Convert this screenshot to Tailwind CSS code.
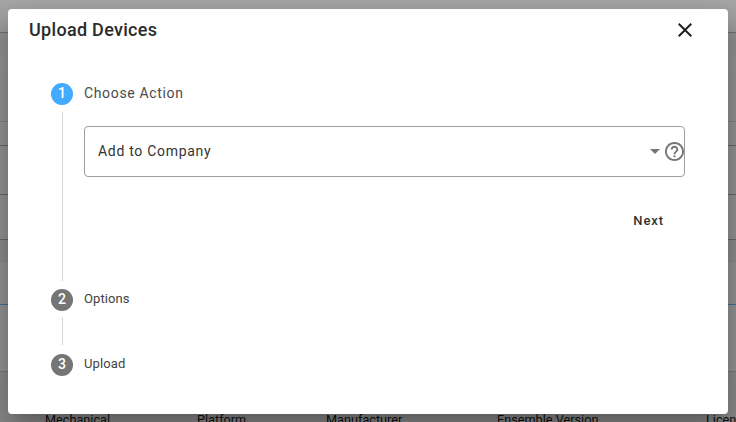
<!DOCTYPE html>
<html lang="en">
<head>
  <meta charset="UTF-8">
  <title>Upload Devices</title>
  <script src="https://cdn.jsdelivr.net/npm/@tailwindcss/browser@4"></script>
</head>
<body class="relative w-[736px] h-[422px] overflow-hidden bg-[#9a9a9a] font-['Roboto',sans-serif]">

  <!-- page behind the dialog -->
  <div class="flex flex-col h-[422px]">
    <div class="h-[33px] shrink-0 border-b border-[#717171] bg-gradient-to-b from-[#aaaaaa] to-[#9c9c9c]"></div>
    <div class="h-[22px] shrink-0 bg-[#929292]"></div>
    <div class="h-[67px] shrink-0 border-b border-[#858585] bg-[#969696]"></div>
    <div class="h-[24px] shrink-0 border-b border-[#6c6c6c] bg-[#969696]"></div>
    <div class="h-[49px] shrink-0 border-b border-[#6c6c6c] bg-[#969696]"></div>
    <div class="h-[45px] shrink-0 border-b border-[#6c6c6c] bg-[#969696]"></div>
    <div class="h-[23px] shrink-0 bg-[#8e8e8e]"></div>
    <div class="h-[42px] shrink-0 border-b border-[#3f6f97] bg-[#969696]"></div>
    <div class="h-[67px] shrink-0 border-b border-[#7c7c7c] bg-[#969696]"></div>
    <div class="relative grow bg-[#8c8c8c]">
      <div class="absolute top-[40px] left-0 text-[12.7px] leading-[16px] text-[#0f0f0f]">
        <span class="absolute left-[45px] whitespace-nowrap">Mechanical</span>
        <span class="absolute left-[197px] whitespace-nowrap">Platform</span>
        <span class="absolute left-[326px] whitespace-nowrap">Manufacturer</span>
        <span class="absolute left-[497px] whitespace-nowrap">Ensemble Version</span>
        <span class="absolute left-[706px] whitespace-nowrap">License</span>
      </div>
    </div>
  </div>

  <!-- dialog -->
  <div class="absolute left-[8px] top-[9px] w-[720px] h-[405px] bg-white rounded-[4px] shadow-[0_11px_15px_-7px_rgba(0,0,0,0.2),0_24px_38px_3px_rgba(0,0,0,0.14),0_9px_46px_8px_rgba(0,0,0,0.12)]">
    <div class="flex items-center justify-between pl-[21px] pr-[31px] h-[42px]">
      <h2 class="text-[18px] leading-[26px] font-medium tracking-[0.3px] text-[#2b2b2b]">Upload Devices</h2>
      <svg class="w-[24px] h-[24px] text-[#212121]" viewBox="0 0 24 24" fill="currentColor"><path d="M19 6.41 17.59 5 12 10.59 6.41 5 5 6.41 10.59 12 5 17.59 6.41 19 12 13.41 17.59 19 19 17.59 13.41 12z"/></svg>
    </div>

    <div class="pl-[43px] pr-[43px] pt-[31px]">
      <!-- step 1 -->
      <div class="flex items-center gap-[11px] h-[23px]">
        <span class="flex items-center justify-center w-[22px] h-[22px] rounded-full bg-[#42aaff] text-white text-[14px] font-medium">1</span>
        <span class="text-[14px] tracking-[0.65px] text-[#4a4a4a]">Choose Action</span>
      </div>
      <div class="flex h-[176px]">
        <div class="w-[22px] flex justify-center pt-[7px]"><div class="w-px h-[169px] bg-[#d9d9d9]"></div></div>
        <div class="ml-[11px] grow pt-[21px]">
          <div class="flex items-center justify-between h-[51px] border border-[#9e9e9e] rounded-[4px] pl-[13px]">
            <span class="text-[14px] tracking-[0.7px] text-[#333333]">Add to Company</span>
            <div class="flex items-center gap-[5px]">
              <span class="w-0 h-0 border-x-[5px] border-x-transparent border-t-[5px] border-t-[#757575]"></span>
              <svg class="w-[19px] h-[19px] text-[#757575]" viewBox="2 2 20 20" fill="currentColor"><path d="M11 18h2v-2h-2v2zm1-16C6.48 2 2 6.48 2 12s4.48 10 10 10 10-4.48 10-10S17.52 2 12 2zm0 18c-4.41 0-8-3.59-8-8s3.59-8 8-8 8 3.59 8 8-3.59 8-8 8zm0-14c-2.21 0-4 1.79-4 4h2c0-1.1.9-2 2-2s2 .9 2 2c0 2-3 1.75-3 5h2c0-2.25 3-2.5 3-5 0-2.21-1.79-4-4-4z"/></svg>
            </div>
          </div>
          <div class="flex justify-end pt-[36px] pr-[21px]">
            <span class="text-[13px] leading-[15px] font-medium tracking-[0.9px] text-[#333333]">Next</span>
          </div>
        </div>
      </div>
      <!-- step 2 -->
      <div class="flex items-center gap-[11px] h-[23px] mt-[7px]">
        <span class="flex items-center justify-center w-[22px] h-[22px] rounded-full bg-[#757575] text-white text-[14px] font-medium">2</span>
        <span class="text-[13px] tracking-[0.1px] text-[#424242] pb-[2px]">Options</span>
      </div>
      <div class="w-[22px] flex justify-center pt-[6px]"><div class="w-px h-[28px] bg-[#d9d9d9]"></div></div>
      <!-- step 3 -->
      <div class="flex items-center gap-[11px] h-[23px] mt-[8px]">
        <span class="flex items-center justify-center w-[22px] h-[22px] rounded-full bg-[#757575] text-white text-[14px] font-medium">3</span>
        <span class="text-[13px] tracking-[0.1px] text-[#424242] pb-[2px]">Upload</span>
      </div>
    </div>
  </div>
</body>
</html>
